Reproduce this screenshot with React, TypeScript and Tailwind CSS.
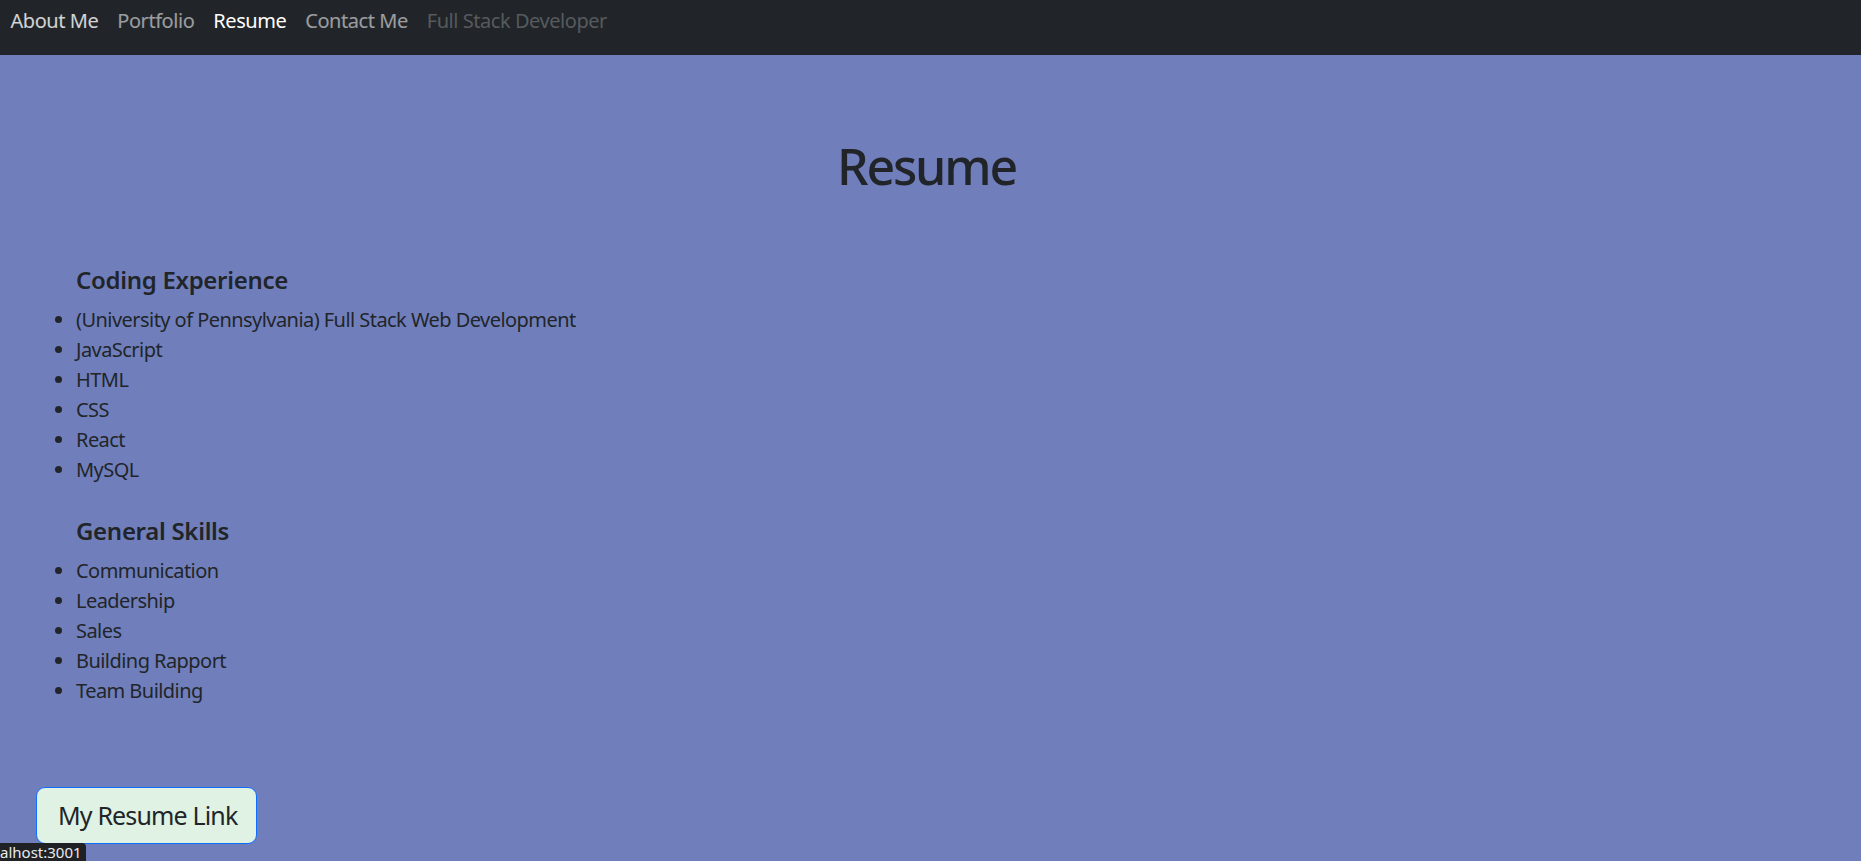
import React from 'react';

const coding = [
  '(University of Pennsylvania) Full Stack Web Development',
  'JavaScript',
  'HTML',
  'CSS',
  'React',
  'MySQL',
];

const skills = ['Communication', 'Leadership', 'Sales', 'Building Rapport', 'Team Building'];

function NavBar() {
  return (
    <nav className="h-[55px] bg-[#212529] flex items-start pt-[6px] pl-[1px] text-[20px] leading-[30px] tracking-[-0.45px]">
      <a className="px-[9.5px] text-white/80">About Me</a>
      <a className="px-[9.5px] text-white/55">Portfolio</a>
      <a className="px-[9.5px] text-white">Resume</a>
      <a className="px-[9.5px] text-white/55">Contact Me</a>
      <span className="px-[9.5px] text-white/25">Full Stack Developer</span>
    </nav>
  );
}

function Section({ title, items, first }: { title: string; items: string[]; first?: boolean }) {
  return (
    <div className={first ? '' : 'mt-[31px]'}>
      <h5 className="pl-[32px] text-[24px] leading-[29px] font-semibold tracking-[-0.3px]">{title}</h5>
      <ul className="mt-[11px] pl-[32px] list-disc text-[20px] leading-[30px] tracking-[-0.55px]">
        {items.map((item) => (
          <li key={item}>{item}</li>
        ))}
      </ul>
    </div>
  );
}

export default function App() {
  return (
    <div
      className="min-h-screen flex flex-col bg-[#707fbb] text-[#212529] relative"
      style={{ fontFamily: '"Noto Sans", "Open Sans", sans-serif' }}
    >
      <NavBar />
      <main className="flex-1">
        <h1 className="mt-[81px] pr-[8px] text-center text-[50px] leading-[60px] font-medium tracking-[-2.2px]">
          Resume
        </h1>
        <div className="mt-[69px] pl-[44px]">
          <Section title="Coding Experience" items={coding} first />
          <Section title="General Skills" items={skills} />
        </div>
        <button className="mt-[81px] ml-[36px] h-[57px] pl-[21px] pr-[19px] text-[25px] leading-[37px] tracking-[-0.85px] bg-[#dff2e3] border border-[#0d6efd] rounded-[9px] text-[#212529]">
          My Resume Link
        </button>
      </main>
      <div className="absolute left-0 bottom-0 h-[18px] pr-[4px] bg-[#202124] text-[#e8eaed] text-[15px] leading-[18px] rounded-tr-[4px]">
        alhost:3001
      </div>
    </div>
  );
}
